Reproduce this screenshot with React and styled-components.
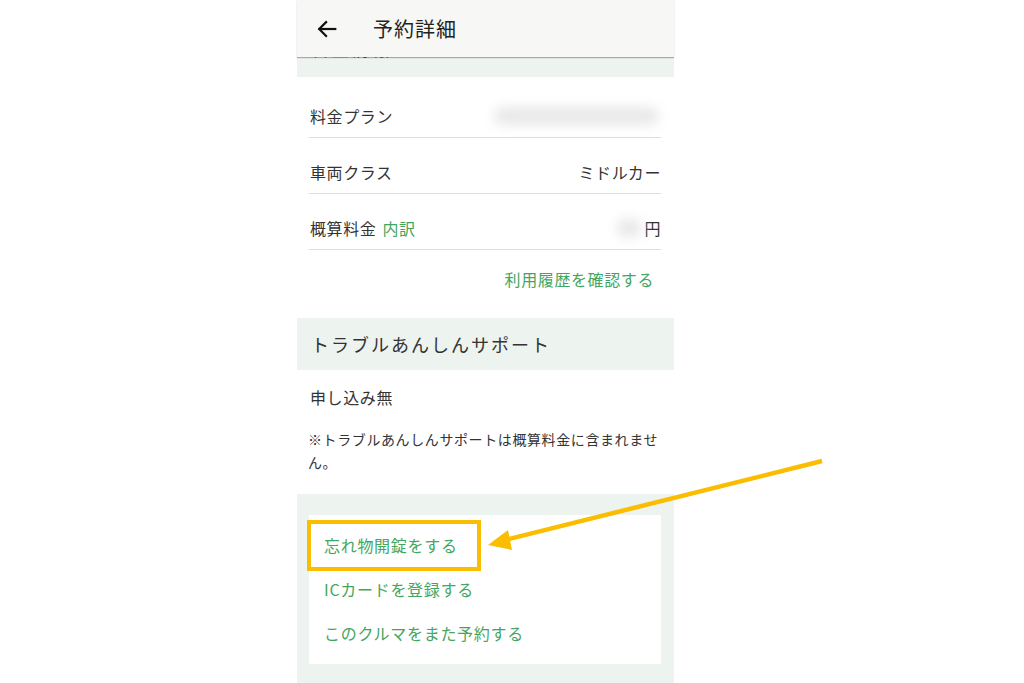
import React from 'react';
import styled, { createGlobalStyle } from 'styled-components';

const GlobalStyle = createGlobalStyle`
  html, body {
    margin: 0;
    padding: 0;
    background: #ffffff;
    font-family: "Noto Sans CJK JP", "Noto Sans", sans-serif;
  }
`;

const Page = styled.div`
  position: relative;
  width: 1024px;
  height: 683px;
  overflow: hidden;
  padding-left: 297px;
  box-sizing: border-box;
`;

const Panel = styled.div`
  width: 377px;
  height: 683px;
  display: flex;
  flex-direction: column;
  background: #ffffff;
`;

const Header = styled.div`
  height: 57px;
  flex: none;
  display: flex;
  align-items: center;
  background: #f7f7f5;
  box-shadow: 0 1px 1px rgba(0, 0, 0, 0.3);
  position: relative;
  z-index: 2;
`;

const Back = styled.div`
  width: 76px;
  display: flex;
  justify-content: flex-start;
  padding-left: 19px;
  box-sizing: border-box;
  svg { display: block; }
`;

const Title = styled.div`
  font-size: 20px;
  letter-spacing: 1px;
  color: #222;
  line-height: 1;
`;

const CutBand = styled.div`
  height: 20px;
  flex: none;
  background: #edf3ee;
  overflow: hidden;
  span {
    display: block;
    margin-top: -21px;
    padding-left: 14px;
    font-size: 18px;
    line-height: 24px;
    color: #555;
    letter-spacing: 2px;
  }
`;

const List = styled.div`
  padding: 5px 13px 0 12px;
`;

const Row = styled.div`
  display: flex;
  justify-content: space-between;
  align-items: center;
  padding: 24px 0 11px 1px;
  line-height: 20px;
  font-size: 16px;
  letter-spacing: 0.6px;
  color: #333;
  border-bottom: 1px solid #dcdcdc;
`;

const Green = styled.span`
  color: #43a660;
  margin-left: ${p => p.gap || 0}px;
`;

const Blur = styled.span`
  display: inline-block;
  width: ${p => p.w}px;
  height: 18px;
  background: #e8e8e8;
  border-radius: 9px;
  filter: blur(6px);
  margin-right: ${p => p.mr || 0}px;
`;

const Value = styled.span`
  display: flex;
  align-items: center;
`;

const HistoryLink = styled.div`
  text-align: right;
  padding: 19px 7px 0 0;
  font-size: 16px;
  line-height: 20px;
  letter-spacing: 0.6px;
  color: #43a660;
  height: 49px;
  box-sizing: border-box;
`;

const SectionHead = styled.div`
  margin-top: 19px;
  height: 52px;
  display: flex;
  align-items: center;
  padding-left: 14px;
  background: #edf3ee;
  font-size: 18px;
  letter-spacing: 2px;
  color: #333;
`;

const Body = styled.div`
  padding: 17px 13px 0 13px;
  color: #333;
`;

const Plain = styled.div`
  font-size: 16px;
  line-height: 20px;
  letter-spacing: 0.6px;
`;

const Note = styled.div`
  margin-top: 21px;
  font-size: 14px;
  line-height: 23px;
  letter-spacing: 0.6px;
  margin-left: -2px;
`;

const Bottom = styled.div`
  margin-top: 20px;
  flex: 1;
  background: #edf3ee;
  padding: 21px 13px 0 12px;
`;

const Card = styled.div`
  background: #ffffff;
  padding: 8px 0 9px 0;
`;

const Action = styled.div`
  position: relative;
  height: 44px;
  display: flex;
  align-items: center;
  padding-left: 15px;
  font-size: 16px;
  letter-spacing: 0.7px;
  color: #43a660;
  ${p => p.marked && `
    &::after {
      content: '';
      position: absolute;
      left: -2px;
      top: -3px;
      width: 174px;
      height: 51px;
      box-sizing: border-box;
      border: 4px solid #fbbd00;
    }
  `}
`;

const Overlay = styled.svg`
  position: absolute;
  left: 0;
  top: 0;
  pointer-events: none;
`;

export default function App() {
  return (
    <>
      <GlobalStyle />
      <Page>
        <Panel>
          <Header>
            <Back>
              <svg width="22" height="22" viewBox="0 0 24 24" fill="none" stroke="#111" strokeWidth="2.4" strokeLinecap="square">
                <path d="M21 12H4" />
                <path d="M11 4.5L3.5 12l7.5 7.5" />
              </svg>
            </Back>
            <Title>予約詳細</Title>
          </Header>
          <CutBand><span>料金情報</span></CutBand>
          <List>
            <Row>
              <span>料金プラン</span>
              <Blur w={165} mr={2} />
            </Row>
            <Row>
              <span>車両クラス</span>
              <span>ミドルカー</span>
            </Row>
            <Row>
              <span>概算料金<Green gap={6}>内訳</Green></span>
              <Value><Blur w={26} mr={2} />円</Value>
            </Row>
            <HistoryLink>利用履歴を確認する</HistoryLink>
          </List>
          <SectionHead>トラブルあんしんサポート</SectionHead>
          <Body>
            <Plain>申し込み無</Plain>
            <Note>※トラブルあんしんサポートは概算料金に含まれません。</Note>
          </Body>
          <Bottom>
            <Card>
              <Action marked>忘れ物開錠をする</Action>
              <Action>ICカードを登録する</Action>
              <Action>このクルマをまた予約する</Action>
            </Card>
          </Bottom>
        </Panel>
        <Overlay width="1024" height="683" viewBox="0 0 1024 683">
          <line x1="822" y1="461" x2="505" y2="540" stroke="#fbbd00" strokeWidth="4.5" strokeLinecap="butt" />
          <polygon points="488,545 508,530 512,550" fill="#fbbd00" />
        </Overlay>
      </Page>
    </>
  );
}
